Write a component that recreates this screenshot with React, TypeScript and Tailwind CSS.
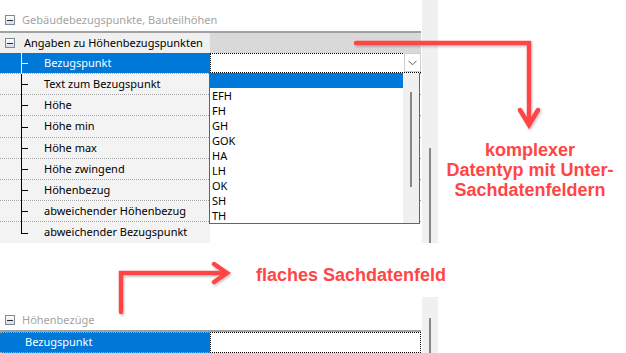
import React from "react";

const MinusBox = ({ mr }: { mr: string }) => (
  <div
    className={`ml-[5px] ${mr} w-[10px] h-[10px] border border-[#7f8a99] bg-gradient-to-b from-white to-[#d7dce4] flex items-center justify-center shrink-0`}
  >
    <div className="w-[6px] h-px bg-[#2b2b2b]" />
  </div>
);

const rows: { label: string; h: string }[] = [
  { label: "Bezugspunkt", h: "h-[21px]" },
  { label: "Text zum Bezugspunkt", h: "h-[21px]" },
  { label: "Höhe", h: "h-[21px]" },
  { label: "Höhe min", h: "h-[22px]" },
  { label: "Höhe max", h: "h-[21px]" },
  { label: "Höhe zwingend", h: "h-[21px]" },
  { label: "Höhenbezug", h: "h-[21px]" },
  { label: "abweichender Höhenbezug", h: "h-[21px]" },
  { label: "abweichender Bezugspunkt", h: "h-[21px]" },
];

const items = ["", "EFH", "FH", "GH", "GOK", "HA", "LH", "OK", "SH", "TH"];

const Chevron = () => (
  <svg width="9" height="6" viewBox="0 0 9 6">
    <path d="M0.5 0.8 L4.5 4.8 L8.5 0.8" fill="none" stroke="#606060" strokeWidth="1" />
  </svg>
);

export default function App() {
  return (
    <div className="relative w-[626px] h-[353px] bg-white overflow-hidden font-['Noto_Sans',sans-serif] text-[11px] text-black">
      {/* top panel */}
      <div className="flex h-[243px]">
        <div className="relative w-[421px] flex flex-col">
          <div className="h-[31px] pt-[10px]">
            <div className="h-[20px] flex items-center text-[#a3a3a3]">
              <MinusBox mr="mr-[7px]" />
              <span>Gebäudebezugspunkte, Bauteilhöhen</span>
            </div>
          </div>
          <div className="h-[2px] bg-[#a0a0a0]" />
          <div className="h-[20px] flex">
            <div className="w-[210px] bg-[#f0f0f0] flex items-center">
              <MinusBox mr="mr-[9px]" />
              <span>Angaben zu Höhenbezugspunkten</span>
            </div>
            <div className="flex-1 bg-[#d9d9d9]" />
          </div>
          {rows.map((r, i) => {
            const sel = i === 0;
            const last = i === rows.length - 1;
            return (
              <div
                key={r.label}
                className={`relative flex ${r.h} ${last ? "" : "border-b border-dotted border-[#a0a0a0]"}`}
              >
                <div
                  className={`w-[210px] flex items-center pl-[44px] ${
                    sel ? "bg-[#0078d7] text-white" : "bg-[#f3f3f3]"
                  }`}
                >
                  {r.label}
                </div>
                <div className="flex-1 bg-white">
                  {sel && (
                    <div className="h-full border border-dotted border-black flex justify-end">
                      <div className="w-[17px] h-[19px] -mt-px -mr-px border border-[#cfcfcf] bg-white flex items-center justify-center">
                        <Chevron />
                      </div>
                    </div>
                  )}
                </div>
                <div
                  className={`absolute left-[21px] top-0 w-px ${last ? "h-1/2" : "-bottom-px"} ${
                    sel ? "bg-white" : "bg-black"
                  }`}
                />
                <div
                  className={`absolute left-[21px] top-1/2 w-[7px] h-px ${sel ? "bg-white" : "bg-black"}`}
                />
              </div>
            );
          })}
          {/* dropdown list */}
          <div className="absolute left-[209px] top-[73px] w-[211px] h-[151px] border border-t-0 border-[#646464] bg-white flex">
            <div className="flex-1 flex flex-col text-[11px]">
              {items.map((it, i) => (
                <div
                  key={i}
                  className={`h-[15px] leading-[15px] pl-[2px] ${i === 0 ? "bg-[#0078d7]" : ""}`}
                >
                  {it}
                </div>
              ))}
            </div>
            <div className="w-[16px] bg-[#f0f0f0] flex flex-col">
              <div className="ml-[7px] mt-[19px] w-[2px] h-[95px] bg-[#888888]" />
            </div>
          </div>
        </div>
        <div className="ml-px w-[16px] bg-[#f0f0f0] flex flex-col">
          <div className="ml-[7px] mt-[148px] w-[2px] flex-1 bg-[#888888]" />
        </div>
      </div>

      <div className="h-[54px]" />

      {/* lower panel */}
      <div className="flex h-[56px]">
        <div className="w-[421px] flex flex-col">
          <div className="h-[33px] pt-[13px]">
            <div className="h-[20px] flex items-center text-[#a3a3a3]">
              <MinusBox mr="mr-[7px]" />
              <span>Höhenbezüge</span>
            </div>
          </div>
          <div className="h-[2px] bg-[#a0a0a0]" />
          <div className="h-[21px] flex">
            <div className="w-[210px] bg-[#0078d7] text-white flex items-center pl-[25px] border-y border-dotted border-[#c89a6a]">
              Bezugspunkt
            </div>
            <div className="flex-1 bg-white border border-dotted border-black" />
          </div>
        </div>
        <div className="ml-px w-[16px] bg-[#f0f0f0] flex flex-col">
          <div className="ml-[7px] mt-[21px] w-[2px] flex-1 bg-[#888888]" />
        </div>
      </div>

      {/* annotations */}
      <svg className="absolute left-0 top-0 pointer-events-none" width="626" height="353" viewBox="0 0 626 353">
        <defs>
          <filter id="sh" x="-10%" y="-10%" width="130%" height="130%">
            <feDropShadow dx="1" dy="1.5" stdDeviation="1" floodColor="#000" floodOpacity="0.25" />
          </filter>
        </defs>
        <g fill="none" stroke="#ff4545" strokeWidth="4.5" strokeLinecap="round" strokeLinejoin="miter" filter="url(#sh)">
          <path d="M356 43 L529 43 L529 124" />
          <path d="M520 110 L529 125 L538 110" />
          <path d="M121 312 L121 273 L226 273" />
          <path d="M214 264 L227 273 L214 282" />
        </g>
      </svg>
      <div className="absolute left-[440px] top-[140px] w-[180px] text-center font-['Liberation_Sans',Arial,sans-serif] font-bold text-[18px] leading-[20px] text-[#ff4545]">
        komplexer
        <br />
        Datentyp mit Unter-
        <br />
        Sachdatenfeldern
      </div>
      <div className="absolute left-[256px] top-[265px] font-['Liberation_Sans',Arial,sans-serif] font-bold text-[18px] leading-[20px] text-[#ff4545]">
        flaches Sachdatenfeld
      </div>
    </div>
  );
}
